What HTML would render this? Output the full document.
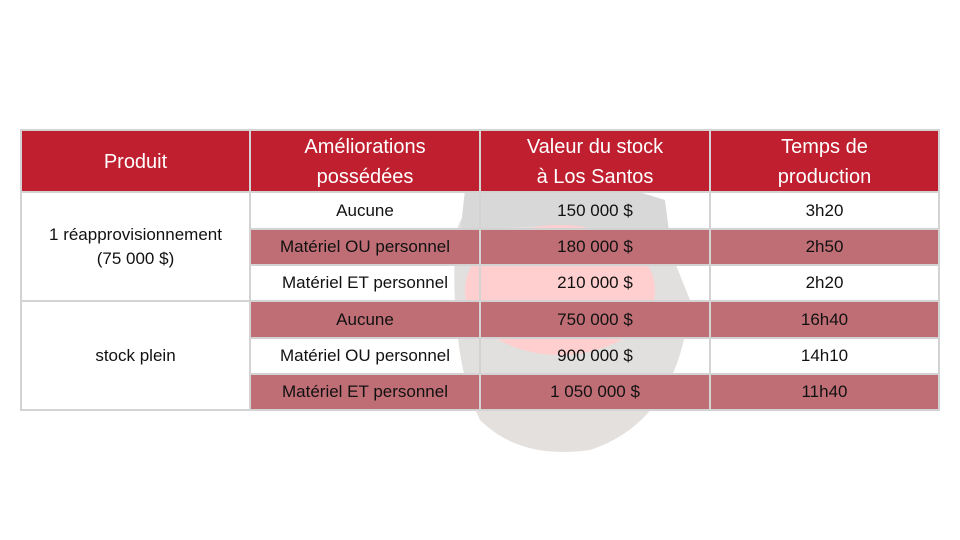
<!DOCTYPE html>
<html><head><meta charset="utf-8"><style>
body{margin:0;width:960px;height:540px;background:#fff;position:relative;overflow:hidden;font-family:"Liberation Sans",sans-serif}
.c{position:absolute;display:flex;align-items:center;justify-content:center;text-align:center;color:#111;font-size:17px;box-sizing:border-box}
.h{background:#bf1f2f;color:#fff;font-size:20px;line-height:30px;padding-top:2px}
.r{background:#bf6e75}
.g{position:absolute;background:#d3d3d3}
</style></head><body>
<svg style="position:absolute;left:0;top:0" width="960" height="540">
<rect x="21" y="130" width="918" height="280" fill="#fff"/>
<g opacity="0.4">
<path d="M455 240 Q460 185 560 182 Q660 185 670 250 L690 300 Q680 420 590 450 Q520 460 480 420 Q450 360 455 240Z" fill="#b9b2ad"/>
<path d="M465 190 Q560 165 665 200 L670 240 Q560 215 460 235Z" fill="#a0a0a0"/>
<ellipse cx="560" cy="290" rx="95" ry="65" fill="#ff8a8a"/>
</g>
</svg>
<div class="c h" style="left:21px;top:130px;width:229px;height:62px">Produit</div>
<div class="c h" style="left:250px;top:130px;width:230px;height:62px">Améliorations<br>possédées</div>
<div class="c h" style="left:480px;top:130px;width:230px;height:62px">Valeur du stock<br>à Los Santos</div>
<div class="c h" style="left:710px;top:130px;width:229px;height:62px">Temps de<br>production</div>

<div class="c" style="left:21px;top:192px;width:229px;height:109px;line-height:24px">1 réapprovisionnement<br>(75 000 $)</div>
<div class="c" style="left:21px;top:301px;width:229px;height:109px">stock plein</div>

<div class="c r" style="left:250px;top:229px;width:689px;height:36px"></div>
<div class="c r" style="left:250px;top:301px;width:689px;height:37px"></div>
<div class="c r" style="left:250px;top:374px;width:689px;height:36px"></div>

<div class="c" style="left:250px;top:192px;width:230px;height:37px">Aucune</div>
<div class="c" style="left:250px;top:229px;width:230px;height:36px">Matériel OU personnel</div>
<div class="c" style="left:250px;top:265px;width:230px;height:36px">Matériel ET personnel</div>
<div class="c" style="left:250px;top:301px;width:230px;height:37px">Aucune</div>
<div class="c" style="left:250px;top:338px;width:230px;height:36px">Matériel OU personnel</div>
<div class="c" style="left:250px;top:374px;width:230px;height:36px">Matériel ET personnel</div>

<div class="c" style="left:480px;top:192px;width:230px;height:37px">150 000 $</div>
<div class="c" style="left:480px;top:229px;width:230px;height:36px">180 000 $</div>
<div class="c" style="left:480px;top:265px;width:230px;height:36px">210 000 $</div>
<div class="c" style="left:480px;top:301px;width:230px;height:37px">750 000 $</div>
<div class="c" style="left:480px;top:338px;width:230px;height:36px">900 000 $</div>
<div class="c" style="left:480px;top:374px;width:230px;height:36px">1 050 000 $</div>

<div class="c" style="left:710px;top:192px;width:229px;height:37px">3h20</div>
<div class="c" style="left:710px;top:229px;width:229px;height:36px">2h50</div>
<div class="c" style="left:710px;top:265px;width:229px;height:36px">2h20</div>
<div class="c" style="left:710px;top:301px;width:229px;height:37px">16h40</div>
<div class="c" style="left:710px;top:338px;width:229px;height:36px">14h10</div>
<div class="c" style="left:710px;top:374px;width:229px;height:36px">11h40</div>

<div class="g" style="left:20px;top:129px;width:920px;height:2px"></div>
<div class="g" style="left:20px;top:191px;width:920px;height:2px"></div>
<div class="g" style="left:249px;top:228px;width:691px;height:2px"></div>
<div class="g" style="left:249px;top:264px;width:691px;height:2px"></div>
<div class="g" style="left:20px;top:300px;width:920px;height:2px"></div>
<div class="g" style="left:249px;top:337px;width:691px;height:2px"></div>
<div class="g" style="left:249px;top:373px;width:691px;height:2px"></div>
<div class="g" style="left:20px;top:409px;width:920px;height:2px"></div>
<div class="g" style="left:20px;top:129px;width:2px;height:282px"></div>
<div class="g" style="left:249px;top:129px;width:2px;height:282px"></div>
<div class="g" style="left:479px;top:129px;width:2px;height:282px"></div>
<div class="g" style="left:709px;top:129px;width:2px;height:282px"></div>
<div class="g" style="left:938px;top:129px;width:2px;height:282px"></div>
</body></html>
